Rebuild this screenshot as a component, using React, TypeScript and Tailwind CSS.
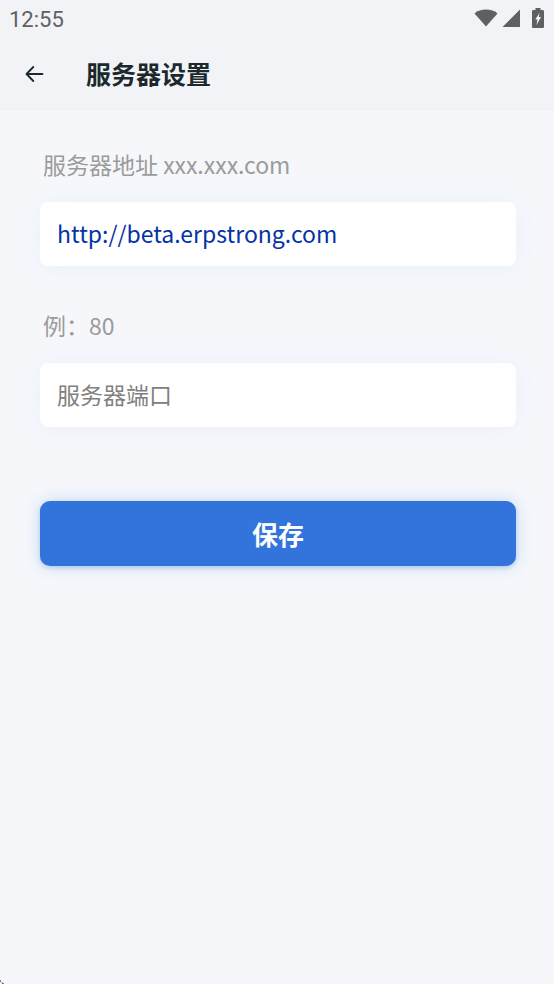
import React from 'react';

const StatusBar: React.FC = () => (
  <div className="flex h-[38px] items-center justify-between pl-[9px] pr-[10px] text-[#5f6063]">
    <span className="pt-[2px] font-['Roboto',sans-serif] text-[22px] leading-9">12:55</span>
    <div className="flex items-center pb-[2px]">
      {/* Wi-Fi */}
      <svg width="24" height="18" viewBox="0 0 24 18" fill="currentColor" aria-hidden="true">
        <path d="M.5 4.400C3.600 1.600 7.600.5 12 .5s8.400 1.100 11.500 3.900L12 17.500z" />
      </svg>
      {/* Mobile signal */}
      <svg className="ml-1" width="18" height="18" viewBox="0 0 18 18" fill="currentColor" aria-hidden="true">
        <path d="M18 .5v17.500H.5z" />
      </svg>
      {/* Battery, charging */}
      <svg className="ml-3" width="12" height="20" viewBox="0 0 12 20" aria-hidden="true">
        <path
          fill="currentColor"
          d="M3.500 0h5v2h2.200c.7 0 1.300.6 1.300 1.300v15.400c0 .7-.6 1.300-1.300 1.300H1.300C.6 20 0 19.400 0 18.700V3.300C0 2.600.6 2 1.300 2h2.200z"
        />
        <path fill="#f1f3f7" d="M7.600 4.800L6.800 9h2.200L4.500 17l.9-5.400H3.300z" />
      </svg>
    </div>
  </div>
);

const Header: React.FC = () => (
  <header className="bg-[#f1f3f7] pb-px">
    <StatusBar />
    <div className="flex h-[72px] items-center pl-[25px]">
      <button type="button" aria-label="返回" className="text-[#1b292d]">
        <svg
          width="19"
          height="18"
          viewBox="0 0 19 18"
          fill="none"
          stroke="currentColor"
          strokeWidth="1.800"
          strokeLinecap="round"
          strokeLinejoin="round"
          aria-hidden="true"
        >
          <path d="M17.500 9H1.500M8.300 2L1.500 9l6.800 7" />
        </svg>
      </button>
      <h1 className="ml-[42px] pb-[2px] text-[25px] leading-9 font-bold text-[#1b292d]">服务器设置</h1>
    </div>
  </header>
);

interface FieldProps {
  id: string;
  label: string;
  value: string;
  placeholder?: string;
  onChange: (value: string) => void;
}

const Field: React.FC<FieldProps> = ({ id, label, value, placeholder, onChange }) => (
  <div className="flex flex-col gap-[22px]">
    <label htmlFor={id} className="pl-[3px] text-[23px] leading-8 text-[#9b9b9b]">
      {label}
    </label>
    <input
      id={id}
      type="text"
      value={value}
      placeholder={placeholder}
      onChange={(e) => onChange(e.target.value)}
      className="h-16 w-full rounded-lg bg-white px-[17px] pb-[2px] text-[23px] text-[#0433a5] shadow-[0_2px_24px_rgba(50,130,190,0.05)] outline-none placeholder:text-[#808080]"
    />
  </div>
);

export default function App() {
  const [address, setAddress] = React.useState('http://beta.erpstrong.com');
  const [port, setPort] = React.useState('');

  return (
    <div className="relative min-h-screen bg-[#f5f7fb] font-['Noto_Sans_CJK_SC',sans-serif]">
      <Header />
      <form className="flex flex-col pt-[37px] pr-[38px] pl-10" onSubmit={(e) => e.preventDefault()}>
        <div className="flex flex-col gap-[43px]">
          <Field id="address" label="服务器地址 xxx.xxx.com" value={address} onChange={setAddress} />
          <Field id="port" label="例：80" value={port} placeholder="服务器端口" onChange={setPort} />
        </div>
        <button
          type="submit"
          className="mt-[74px] h-[65px] rounded-[10px] bg-[#3273dc] text-[26px] font-bold text-white shadow-[0_0_16px_rgba(50,135,230,0.25),0_2px_4px_rgba(40,80,160,0.2)]"
        >
          保存
        </button>
      </form>
      <svg className="absolute bottom-0 left-0" width="4" height="4" viewBox="0 0 4 4" aria-hidden="true">
        <path d="M0 0l1 1v1l2 1 1 1H3L0 1z" fill="#000" />
      </svg>
    </div>
  );
}
